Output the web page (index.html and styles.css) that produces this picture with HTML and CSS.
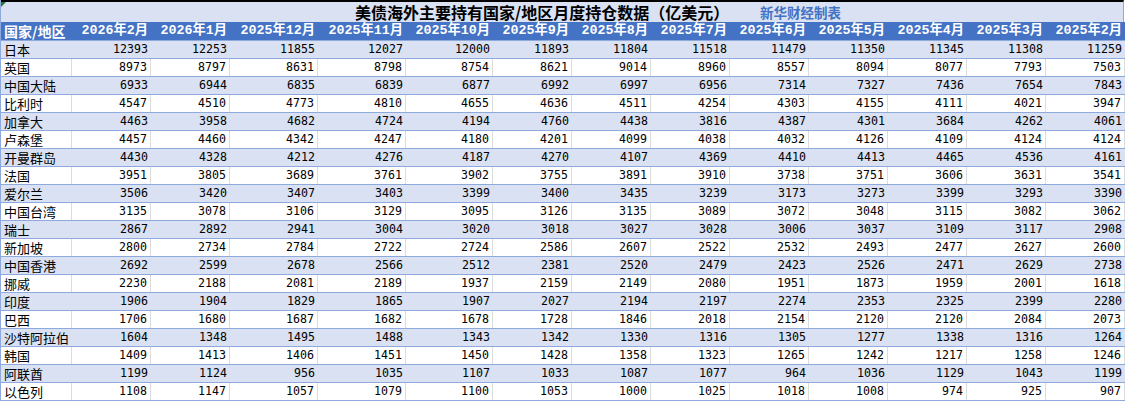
FILE: index.html
```html
<!DOCTYPE html>
<html lang="zh">
<head>
<meta charset="utf-8">
<title>美债海外主要持有国家/地区月度持仓数据</title>
<link rel="stylesheet" href="styles.css">
</head>
<body>
<div class="sheet">
  <div class="title-row">
    <span class="title">美债海外主要持有国家/地区月度持仓数据（亿美元）</span>
    <span class="credit">新华财经制表</span>
  </div>
  <div class="row head">
    <div class="c name">国家/地区</div><div class="c">2026年2月</div><div class="c">2026年1月</div><div class="c">2025年12月</div><div class="c">2025年11月</div><div class="c">2025年10月</div><div class="c">2025年9月</div><div class="c">2025年8月</div><div class="c">2025年7月</div><div class="c">2025年6月</div><div class="c">2025年5月</div><div class="c">2025年4月</div><div class="c">2025年3月</div><div class="c">2025年2月</div>
  </div>
  <div class="row alt"><div class="c name">日本</div><div class="c">12393</div><div class="c">12253</div><div class="c">11855</div><div class="c">12027</div><div class="c">12000</div><div class="c">11893</div><div class="c">11804</div><div class="c">11518</div><div class="c">11479</div><div class="c">11350</div><div class="c">11345</div><div class="c">11308</div><div class="c">11259</div></div>
  <div class="row plain"><div class="c name">英国</div><div class="c">8973</div><div class="c">8797</div><div class="c">8631</div><div class="c">8798</div><div class="c">8754</div><div class="c">8621</div><div class="c">9014</div><div class="c">8960</div><div class="c">8557</div><div class="c">8094</div><div class="c">8077</div><div class="c">7793</div><div class="c">7503</div></div>
  <div class="row alt"><div class="c name">中国大陆</div><div class="c">6933</div><div class="c">6944</div><div class="c">6835</div><div class="c">6839</div><div class="c">6877</div><div class="c">6992</div><div class="c">6997</div><div class="c">6956</div><div class="c">7314</div><div class="c">7327</div><div class="c">7436</div><div class="c">7654</div><div class="c">7843</div></div>
  <div class="row plain"><div class="c name">比利时</div><div class="c">4547</div><div class="c">4510</div><div class="c">4773</div><div class="c">4810</div><div class="c">4655</div><div class="c">4636</div><div class="c">4511</div><div class="c">4254</div><div class="c">4303</div><div class="c">4155</div><div class="c">4111</div><div class="c">4021</div><div class="c">3947</div></div>
  <div class="row alt"><div class="c name">加拿大</div><div class="c">4463</div><div class="c">3958</div><div class="c">4682</div><div class="c">4724</div><div class="c">4194</div><div class="c">4760</div><div class="c">4438</div><div class="c">3816</div><div class="c">4387</div><div class="c">4301</div><div class="c">3684</div><div class="c">4262</div><div class="c">4061</div></div>
  <div class="row plain"><div class="c name">卢森堡</div><div class="c">4457</div><div class="c">4460</div><div class="c">4342</div><div class="c">4247</div><div class="c">4180</div><div class="c">4201</div><div class="c">4099</div><div class="c">4038</div><div class="c">4032</div><div class="c">4126</div><div class="c">4109</div><div class="c">4124</div><div class="c">4124</div></div>
  <div class="row alt"><div class="c name">开曼群岛</div><div class="c">4430</div><div class="c">4328</div><div class="c">4212</div><div class="c">4276</div><div class="c">4187</div><div class="c">4270</div><div class="c">4107</div><div class="c">4369</div><div class="c">4410</div><div class="c">4413</div><div class="c">4465</div><div class="c">4536</div><div class="c">4161</div></div>
  <div class="row plain"><div class="c name">法国</div><div class="c">3951</div><div class="c">3805</div><div class="c">3689</div><div class="c">3761</div><div class="c">3902</div><div class="c">3755</div><div class="c">3891</div><div class="c">3910</div><div class="c">3738</div><div class="c">3751</div><div class="c">3606</div><div class="c">3631</div><div class="c">3541</div></div>
  <div class="row alt"><div class="c name">爱尔兰</div><div class="c">3506</div><div class="c">3420</div><div class="c">3407</div><div class="c">3403</div><div class="c">3399</div><div class="c">3400</div><div class="c">3435</div><div class="c">3239</div><div class="c">3173</div><div class="c">3273</div><div class="c">3399</div><div class="c">3293</div><div class="c">3390</div></div>
  <div class="row plain"><div class="c name">中国台湾</div><div class="c">3135</div><div class="c">3078</div><div class="c">3106</div><div class="c">3129</div><div class="c">3095</div><div class="c">3126</div><div class="c">3135</div><div class="c">3089</div><div class="c">3072</div><div class="c">3048</div><div class="c">3115</div><div class="c">3082</div><div class="c">3062</div></div>
  <div class="row alt"><div class="c name">瑞士</div><div class="c">2867</div><div class="c">2892</div><div class="c">2941</div><div class="c">3004</div><div class="c">3020</div><div class="c">3018</div><div class="c">3027</div><div class="c">3028</div><div class="c">3006</div><div class="c">3037</div><div class="c">3109</div><div class="c">3117</div><div class="c">2908</div></div>
  <div class="row plain"><div class="c name">新加坡</div><div class="c">2800</div><div class="c">2734</div><div class="c">2784</div><div class="c">2722</div><div class="c">2724</div><div class="c">2586</div><div class="c">2607</div><div class="c">2522</div><div class="c">2532</div><div class="c">2493</div><div class="c">2477</div><div class="c">2627</div><div class="c">2600</div></div>
  <div class="row alt"><div class="c name">中国香港</div><div class="c">2692</div><div class="c">2599</div><div class="c">2678</div><div class="c">2566</div><div class="c">2512</div><div class="c">2381</div><div class="c">2520</div><div class="c">2479</div><div class="c">2423</div><div class="c">2526</div><div class="c">2471</div><div class="c">2629</div><div class="c">2738</div></div>
  <div class="row plain"><div class="c name">挪威</div><div class="c">2230</div><div class="c">2188</div><div class="c">2081</div><div class="c">2189</div><div class="c">1937</div><div class="c">2159</div><div class="c">2149</div><div class="c">2080</div><div class="c">1951</div><div class="c">1873</div><div class="c">1959</div><div class="c">2001</div><div class="c">1618</div></div>
  <div class="row alt"><div class="c name">印度</div><div class="c">1906</div><div class="c">1904</div><div class="c">1829</div><div class="c">1865</div><div class="c">1907</div><div class="c">2027</div><div class="c">2194</div><div class="c">2197</div><div class="c">2274</div><div class="c">2353</div><div class="c">2325</div><div class="c">2399</div><div class="c">2280</div></div>
  <div class="row plain"><div class="c name">巴西</div><div class="c">1706</div><div class="c">1680</div><div class="c">1687</div><div class="c">1682</div><div class="c">1678</div><div class="c">1728</div><div class="c">1846</div><div class="c">2018</div><div class="c">2154</div><div class="c">2120</div><div class="c">2120</div><div class="c">2084</div><div class="c">2073</div></div>
  <div class="row alt"><div class="c name">沙特阿拉伯</div><div class="c">1604</div><div class="c">1348</div><div class="c">1495</div><div class="c">1488</div><div class="c">1343</div><div class="c">1342</div><div class="c">1330</div><div class="c">1316</div><div class="c">1305</div><div class="c">1277</div><div class="c">1338</div><div class="c">1316</div><div class="c">1264</div></div>
  <div class="row plain"><div class="c name">韩国</div><div class="c">1409</div><div class="c">1413</div><div class="c">1406</div><div class="c">1451</div><div class="c">1450</div><div class="c">1428</div><div class="c">1358</div><div class="c">1323</div><div class="c">1265</div><div class="c">1242</div><div class="c">1217</div><div class="c">1258</div><div class="c">1246</div></div>
  <div class="row alt"><div class="c name">阿联酋</div><div class="c">1199</div><div class="c">1124</div><div class="c">956</div><div class="c">1035</div><div class="c">1107</div><div class="c">1033</div><div class="c">1087</div><div class="c">1077</div><div class="c">964</div><div class="c">1036</div><div class="c">1129</div><div class="c">1043</div><div class="c">1199</div></div>
  <div class="row plain last"><div class="c name">以色列</div><div class="c">1108</div><div class="c">1147</div><div class="c">1057</div><div class="c">1079</div><div class="c">1100</div><div class="c">1053</div><div class="c">1000</div><div class="c">1025</div><div class="c">1018</div><div class="c">1008</div><div class="c">974</div><div class="c">925</div><div class="c">907</div></div>
</div>
</body>
</html>
```
FILE: styles.css
```css
html, body {
  margin: 0;
  padding: 0;
  background: #ffffff;
}

.sheet {
  position: relative;
  width: 1125px;
  box-sizing: border-box;
  border-left: 1px solid #8ea9db;
  border-bottom: 1px solid #8ea9db;
  font-family: "Noto Sans CJK SC", sans-serif;
  color: #000;
}

.title-row {
  position: relative;
  height: 22px;
  box-sizing: border-box;
  border-top: 2px solid #000;
  border-right: 1px solid #8ea9db;
  margin-right: 1px;
  background: #d9e1f2;
  display: flex;
  align-items: center;
  padding-left: 354px;
}

.title-row::before {
  content: "";
  position: absolute;
  left: 0;
  top: 0;
  width: 0;
  height: 0;
  border-top: 5px solid #1e7b34;
  border-right: 5px solid transparent;
}

.title {
  width: 405px;
  flex: none;
  font-weight: 700;
  font-size: 16px;
  line-height: 20px;
  white-space: nowrap;
}

.credit {
  font-weight: 700;
  font-size: 13.5px;
  line-height: 20px;
  color: #4472c4;
  white-space: nowrap;
}

.row {
  display: grid;
  grid-template-columns: 71px 79px 79px 88px 88px 87px repeat(8, 79px);
  height: 18px;
  box-sizing: border-box;
  border-top: 1px solid #8ea9db;
}

.row.alt {
  background: #d9e1f2;
}

.row.plain {
  background: #ffffff;
}

.row.plain .c {
  border-right: 1px solid #dcdcdc;
}

.row.head {
  border-top: none;
  background: #4472c4;
  color: #ffffff;
}

.c {
  box-sizing: border-box;
  text-align: right;
  padding-right: 3px;
  font-family: "DejaVu Sans Mono", "Noto Sans CJK SC", monospace;
  font-size: 11.6px;
  line-height: 17px;
  white-space: nowrap;
  overflow: hidden;
}

.c.name {
  text-align: left;
  padding-left: 3px;
  padding-right: 0;
  font-family: "Noto Sans CJK SC", sans-serif;
  font-size: 13px;
}

.row.head .c {
  font-family: "Liberation Mono", "Noto Sans CJK SC", monospace;
  font-weight: 700;
  font-size: 13.3px;
  line-height: 18px;
}

.row.head .c.name {
  font-family: "Noto Sans CJK SC", sans-serif;
  font-size: 14px;
}
```
